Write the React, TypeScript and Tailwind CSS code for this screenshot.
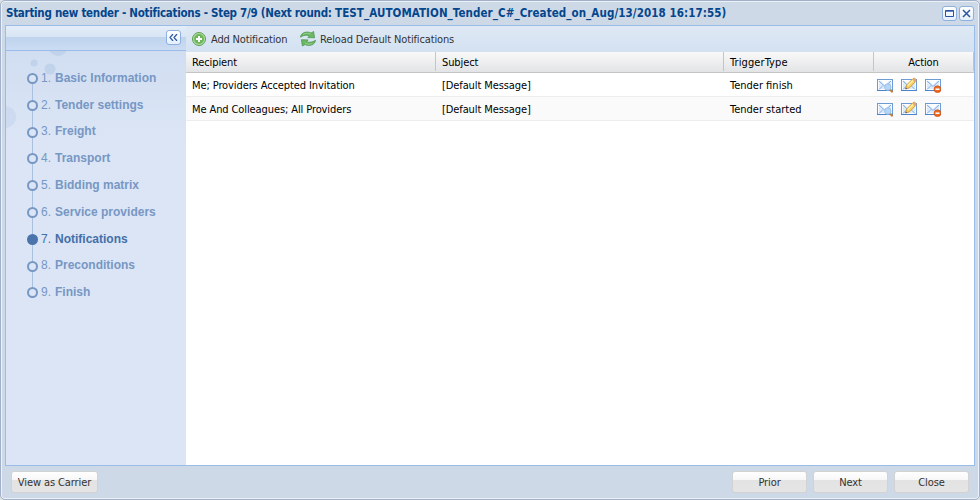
import React from "react";

const UI = "font-['DejaVu_Sans_Condensed','DejaVu_Sans',sans-serif] [font-stretch:condensed]";

const steps = [
  { label: "Basic Information", h: "h-[27px]" },
  { label: "Tender settings", h: "h-[27px]" },
  { label: "Freight", h: "h-[26px]" },
  { label: "Transport", h: "h-[27px]" },
  { label: "Bidding matrix", h: "h-[27px]" },
  { label: "Service providers", h: "h-[27px]" },
  { label: "Notifications", h: "h-[27px]", active: true },
  { label: "Preconditions", h: "h-[26px]" },
  { label: "Finish", h: "h-[27px]" },
];

const rows = [
  { to: "Me; Providers Accepted Invitation", type: "Tender finish" },
  { to: "Me And Colleagues; All Providers", type: "Tender started" },
];

function Envelope({ children }: { children?: React.ReactNode }) {
  return (
    <svg width="16" height="16" viewBox="0 0 16 16" className="block">
      <rect x="0.5" y="2.5" width="15" height="11" fill="#dcebfb" stroke="#6c9bd6" />
      <path d="M1.5 3.500h13v9h-13z" fill="none" stroke="#f8fcff" />
      <path d="M2 4L8 9.500L14 4M2 12.500L6 8.500M14 12.500L10 8.500" fill="none" stroke="#86aee2" />
      <path d="M3 3h10L8 8z" fill="#fff" />
      <path d="M0 13.500h16" stroke="#4d83c9" />
      {children}
    </svg>
  );
}

function ActionIcons() {
  return (
    <div className="flex gap-2">
      <Envelope>
        <path d="M13 12.500l2.700 2.700" stroke="#b78346" strokeWidth="2.200" />
        <circle cx="10.800" cy="10" r="3.200" fill="#b5d6f5" stroke="#9cc3ea" />
      </Envelope>
      <Envelope>
        <path d="M4.600 12l1-4L12 1.600q1.200-1 2.500.2t.300 2.600L8.500 10.800z" fill="#f9d05f" stroke="#c99335" strokeWidth=".8" />
        <path d="M6.700 8.800l5.600-5.600" stroke="#fff0a8" strokeWidth="1.300" />
        <path d="M12.300 1.700q1.100-.8 2.200.3t.300 2.300l-.9.9-2.600-2.600z" fill="#e6a878" />
        <path d="M4.400 12.200l.5-1.800 1.300 1.300z" fill="#5b4c38" />
      </Envelope>
      <Envelope>
        <circle cx="12.500" cy="12.200" r="3.400" fill="#ea6a24" stroke="#c94c14" strokeWidth=".7" />
        <path d="M10.500 12.200h4" stroke="#fff" strokeWidth="1.500" />
      </Envelope>
    </div>
  );
}

function AddIcon() {
  return (
    <svg width="14" height="14" viewBox="0 0 14 14" className="block">
      <circle cx="7" cy="7" r="6.500" fill="#b5dba8" stroke="#5a9f50" />
      <circle cx="7" cy="7" r="4.900" fill="#6ab858" />
      <path d="M7 4v6M4 7h6" stroke="#fff" strokeWidth="2" />
    </svg>
  );
}

function ReloadIcon() {
  return (
    <svg width="16" height="16" viewBox="0 0 16 16" className="block">
      <g fill="#6cb763" stroke="#459148" strokeWidth=".7" strokeLinejoin="round">
        <path d="M.5 6.200C1 1.500 7-.3 11 2L13.600.5l1 6.300-6.800-.2 1.800-1.800C6.500 3.700 3.500 4.200 .5 6.200z" />
        <path d="M15.500 9.300C15 14 9 15.800 5 13.500L2.400 15l-1-6.300 6.800.2-1.800 1.800C9.500 11.800 12.500 11.300 15.500 9.300z" />
      </g>
      <path d="M3 3.600C5 1.800 8.500 1.800 11 3.400M12.500 12.200C10.500 13.500 7.500 13.600 5 12.200" fill="none" stroke="#a5d69b" strokeWidth=".7" />
    </svg>
  );
}

function ToolButton({ children }: { children: React.ReactNode }) {
  return (
    <button className="flex size-[15px] items-center justify-center rounded-[3px] border border-[#8eb0df] bg-linear-to-b from-white to-[#e4effc]">
      {children}
    </button>
  );
}

function FooterButton({ children, w = "w-[75px]" }: { children: React.ReactNode; w?: string }) {
  return (
    <button
      className={`${w} h-[22px] rounded-[3px] border border-[#d2d2d2] bg-[linear-gradient(#ffffff,#f7f7f7_40%,#e3e3e3_40%,#e5e5e5)] text-center text-[11px] leading-[21px] tracking-[-0.1px] whitespace-nowrap text-[#333]`}
    >
      {children}
    </button>
  );
}

export default function App() {
  return (
    <div className="h-[500px] w-[980px] bg-[#dfe3e9]">
      <div className={`${UI} flex h-[500px] w-[980px] flex-col rounded-[5px] border border-[#a2b1c9] bg-[#ced9e7] px-1 pb-1 text-[11px] tracking-[-0.1px] text-black shadow-[inset_0_0_0_1px_#ecf1f8]`}>
        <header className="flex h-6 shrink-0 items-center justify-between pr-px pl-px">
          <h1 className="pt-px text-[11.5px] font-bold whitespace-nowrap text-[#04468c]">
            <span className="tracking-[-0.27px]">Starting new tender - Notifications - Step 7/9 (Next round: </span>
            <span className="tracking-[0.075px]">TEST_AUTOMATION_Tender_C#_Created_on_Aug/13/2018 16:17:55)</span>
          </h1>
          <div className="flex gap-[2px]">
            <ToolButton>
              <svg width="9" height="7" viewBox="0 0 9 7"><path d="M.5.5h8v6h-8zM0 1.200h9" fill="none" stroke="#2a55a3" /></svg>
            </ToolButton>
            <ToolButton>
              <svg width="9" height="9" viewBox="0 0 9 9"><path d="M1 1l7 7M8 1l-7 7" stroke="#2a55a3" strokeWidth="1.500" /></svg>
            </ToolButton>
          </div>
        </header>

        <main className="flex h-[441px] shrink-0 border border-[#99bce8] bg-white">
          <aside className="flex w-[180px] shrink-0 flex-col bg-[#dbe5f5]">
            <div className="flex h-[25px] shrink-0 items-start justify-end border-b border-[#99bce8] bg-[linear-gradient(#e5edf8,#d8e5f5_44%,#bfd3ee_44%,#cbdcf3)] pt-1 pr-[5px]">
              <ToolButton>
                <svg width="9" height="7" viewBox="0 0 9 7"><path d="M4 0L1 3.500 4 7M8 0L5 3.500 8 7" fill="none" stroke="#2a55a3" strokeWidth="1.200" /></svg>
              </ToolButton>
            </div>
            <div className="relative flex-1 bg-[linear-gradient(#d1def1,#dbe5f5_90px)]">
              <svg width="180" height="110" className="absolute top-0 left-0" fill="#c1d2eb">
                <circle cx="52" cy="-5" r="10" />
                <circle cx="28" cy="12" r="3.500" />
                <circle cx="44" cy="18" r="5.500" />
                <circle cx="-1" cy="66" r="11" opacity=".5" />
              </svg>
              <svg width="1" height="214" className="absolute top-[27px] left-[26px]"><rect width="1" height="214" fill="#a9c0df" /></svg>
              <ol className="relative pt-[14px] pl-[21px] font-['Liberation_Sans',Arial,sans-serif] text-[12px] tracking-normal">
                {steps.map((s, i) => (
                  <li key={s.label} className={`${s.h} flex items-center ${s.active ? "text-[#446fa9]" : "text-[#7797c4]"}`}>
                    <svg width="11" height="11" viewBox="0 0 11 11" className="mt-2 shrink-0 self-start">
                      <circle cx="5.500" cy="5.500" r="4.500" fill={s.active ? "#4b74ad" : "#dbe5f5"} stroke={s.active ? "#4b74ad" : "#7797c4"} strokeWidth="2" />
                    </svg>
                    <span className="mb-[2px] ml-[3px] w-[14px]">{i + 1}.</span>
                    <span className="mb-[2px] font-bold whitespace-nowrap">{s.label}</span>
                  </li>
                ))}
              </ol>
            </div>
          </aside>

          <section className="flex flex-1 flex-col">
            <div className="flex h-[26px] shrink-0 items-center bg-linear-to-b from-[#dfe9f5] to-[#d3e1f1] pl-[6px] text-[#333]">
              <AddIcon />
              <span className="mt-[2px] mr-[12px] ml-[5px] w-[77px] tracking-[-0.17px] whitespace-nowrap">Add Notification</span>
              <ReloadIcon />
              <span className="mt-[2px] ml-1 tracking-[-0.14px] whitespace-nowrap">Reload Default Notifications</span>
            </div>
            <div className="flex h-[21px] shrink-0 border-b border-[#c5c5c5] bg-linear-to-b from-[#f9f9f9] to-[#e3e4e6] leading-[21px]">
              <div className="h-[19px] w-[250px] border-r border-[#c5c5c5] pl-[6px]">Recipient</div>
              <div className="h-[19px] w-[288px] border-r border-[#c5c5c5] pl-[6px]">Subject</div>
              <div className="h-[19px] w-[150px] border-r border-[#c5c5c5] pl-[6px] tracking-[0.1px]">TriggerType</div>
              <div className="h-[19px] w-[100px] border-r border-[#c5c5c5] text-center">Action</div>
            </div>
            {rows.map((r, i) => (
              <div key={r.to} className={`flex h-6 shrink-0 items-center border-b border-[#ededed] leading-4 ${i % 2 ? "bg-[#fafafa]" : "bg-white"}`}>
                <div className="w-[250px] pt-[2px] pl-[6px] whitespace-nowrap">{r.to}</div>
                <div className="w-[288px] pt-[2px] pl-[6px]">[Default Message]</div>
                <div className="w-[150px] pt-[2px] pl-[6px] tracking-normal">{r.type}</div>
                <div className="w-[100px] pl-[3px]"><ActionIcons /></div>
              </div>
            ))}
          </section>
        </main>

        <footer className="flex shrink-0 items-start gap-[6px] pt-[5px] pr-[6px] pl-[6px]">
          <FooterButton w="w-[87px]">View as Carrier</FooterButton>
          <div className="flex-1" />
          <FooterButton>Prior</FooterButton>
          <FooterButton>Next</FooterButton>
          <FooterButton>Close</FooterButton>
        </footer>
      </div>
    </div>
  );
}
